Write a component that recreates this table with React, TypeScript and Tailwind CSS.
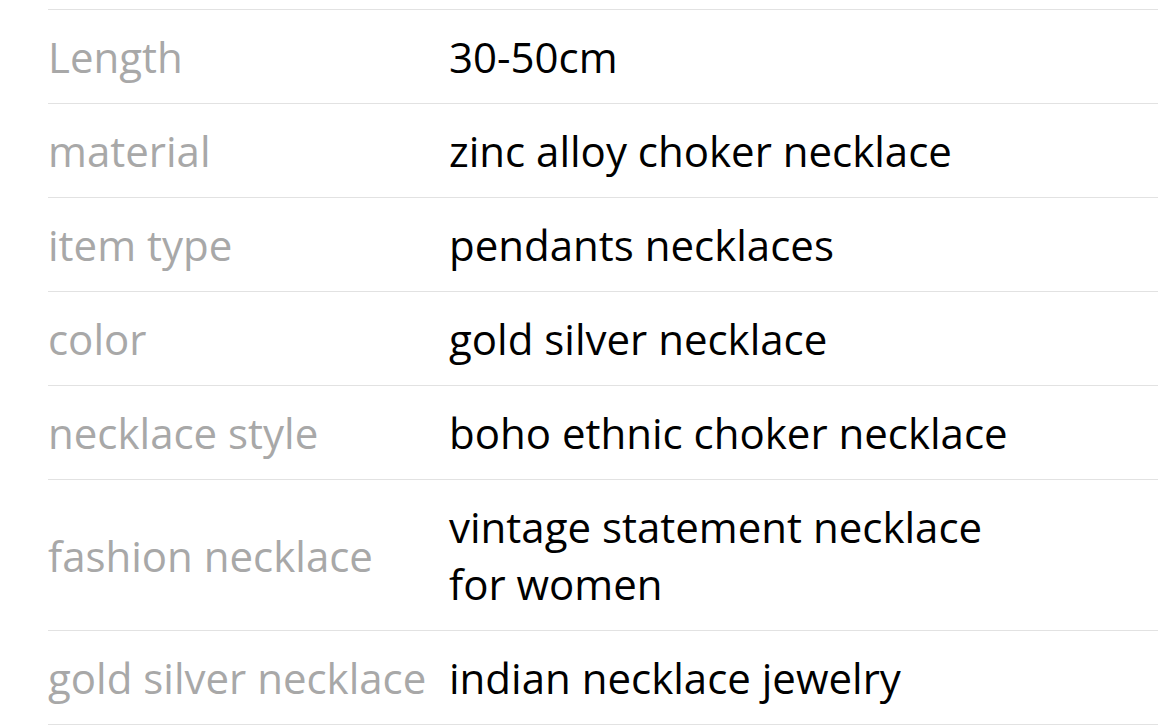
import React from "react";

const rows: [string, string][] = [
  ["Length", "30-50cm"],
  ["material", "zinc alloy choker necklace"],
  ["item type", "pendants necklaces"],
  ["color", "gold silver necklace"],
  ["necklace style", "boho ethnic choker necklace"],
  ["fashion necklace", "vintage statement necklace for women"],
  ["gold silver necklace", "indian necklace jewelry"],
];

export default function App() {
  return (
    <div
      className="w-[1158px] h-[725px] overflow-hidden bg-white pl-[48px] pt-[9px]"
      style={{ fontFamily: '"Open Sans", "Noto Sans", sans-serif' }}
    >
      <div className="border-t border-[#e2e2e2]">
        {rows.map(([k, v]) => (
          <div key={k} className="flex items-center border-b border-[#e2e2e2] py-[18px] text-[42px] leading-[57px]">
            <div className="w-[401px] shrink-0 text-[#a8a8a8] whitespace-nowrap">{k}</div>
            <div className="max-w-[575px] text-black">{v}</div>
          </div>
        ))}
      </div>
    </div>
  );
}
